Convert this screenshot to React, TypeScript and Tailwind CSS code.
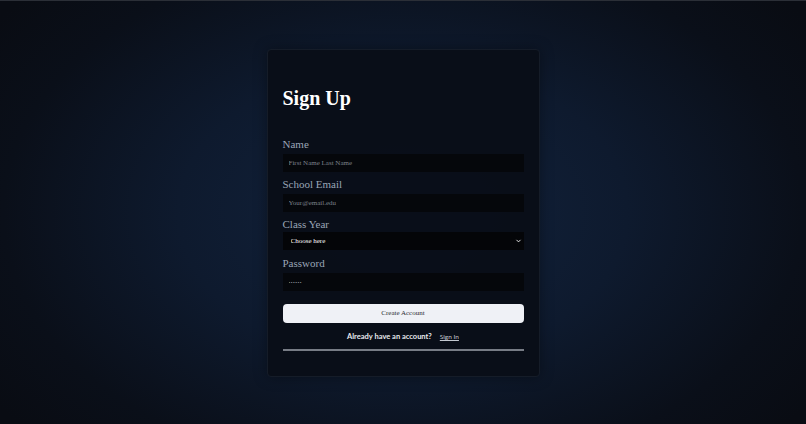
import { ChevronDown } from 'lucide-react';

const serif = "font-['Liberation_Serif','Times_New_Roman',serif]";

type FieldProps = {
  label: string;
  children: React.ReactNode;
  gap?: string;
};

const Field = ({ label, children, gap = 'mb-[3px]' }: FieldProps) => (
  <div className="flex flex-col">
    <label className={`${serif} ${gap} h-[13px] text-[11px] leading-[13px] text-[#9aa5b6]`}>{label}</label>
    {children}
  </div>
);

export default function App() {
  return (
    <div className="flex h-[424px] w-full justify-center overflow-hidden border-t border-[#2b2f37] bg-[radial-gradient(ellipse_62%_78%_at_50%_50%,#12233d_0%,#0e1a2e_45%,#0a0f19_80%,#090c13_100%)] pt-[48px]">
      <div className="flex h-[328px] w-[273px] flex-col rounded-[4px] border border-[#151c28] bg-[#0a0e17]/95 px-[15px] pt-[38px] shadow-[0_0_14px_rgba(0,0,0,0.35)]">
        <h1 className={`${serif} h-[21px] text-[20px] font-bold leading-[21px] text-white`}>Sign Up</h1>

        <div className="mt-[29px] flex flex-col">
          <Field label="Name">
            <input
              placeholder="First Name Last Name"
              className={`${serif} h-[18px] w-full bg-[#05070b] px-[6px] text-[7px] text-white outline-none placeholder:text-[#7c828c]`}
            />
          </Field>

          <div className="h-[6px]" />
          <Field label="School Email">
            <input
              placeholder="Your@email.edu"
              className={`${serif} h-[18px] w-full bg-[#05070b] px-[6px] text-[7px] text-white outline-none placeholder:text-[#7c828c]`}
            />
          </Field>

          <div className="h-[6px]" />
          <Field label="Class Year" gap="mb-[1px]">
            <div className="relative h-[18px] w-full bg-[#040508]">
              <select
                className={`${serif} block h-[18px] w-full appearance-none bg-transparent py-0 pl-[8px] text-[7px] leading-[18px] text-white outline-none`}
                defaultValue=""
              >
                <option value="">Choose here</option>
                <option value="2025">2025</option>
                <option value="2026">2026</option>
                <option value="2027">2027</option>
                <option value="2028">2028</option>
              </select>
              <ChevronDown
                className="pointer-events-none absolute right-[2px] top-1/2 h-[7px] w-[7px] -translate-y-1/2 text-white"
                strokeWidth={3}
              />
            </div>
          </Field>

          <div className="h-[7px]" />
          <Field label="Password">
            <input
              type="password"
              placeholder="••••••"
              className={`${serif} h-[18px] w-full bg-[#05070b] px-[6px] text-[5px] tracking-[0.5px] text-white outline-none placeholder:text-[#9aa0a8]`}
            />
          </Field>
        </div>

        <button
          className={`${serif} mt-[13px] h-[19px] w-full rounded-[4px] bg-[#eff1f6] text-[7px] text-[#2a2d33]`}
        >
          Create Account
        </button>

        <div className="mt-[8px] flex h-[12px] items-center justify-center gap-[8px] font-['Lato',sans-serif]">
          <span className="text-[7.5px] font-bold text-[#e8eaee]">Already have an account?</span>
          <a href="#" className="text-[6.5px] text-[#c3c8d0] underline">
            Sign In
          </a>
        </div>

        <div className="mt-[6px] h-[1.5px] w-full bg-[#777c85]" />
      </div>
    </div>
  );
}
